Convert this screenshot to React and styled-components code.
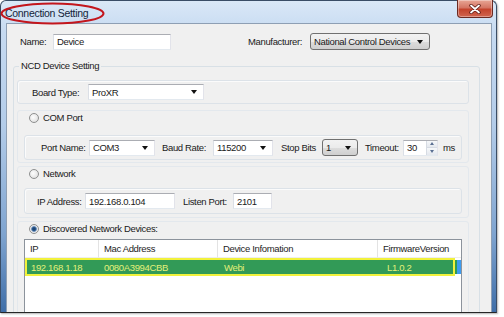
import React from 'react';
import styled, { createGlobalStyle } from 'styled-components';

const GlobalStyle = createGlobalStyle`
  html, body { margin: 0; padding: 0; background: #fff; }
  body {
    font-family: "Liberation Sans", Arial, sans-serif;
    font-size: 9.5px;
    letter-spacing: -0.35px;
    color: #1a1a1a;
  }
  * { box-sizing: border-box; }
`;

const Page = styled.div`
  width: 504px;
  height: 317px;
  overflow: hidden;
  background: #fff;
`;

const Window = styled.div`
  position: relative;
  width: 497px;
  height: 313px;
  display: flex;
  flex-direction: column;
  padding: 0 4px 0 5px;
  border: 1px solid #3a4d66;
  border-bottom-color: #262626;
  border-radius: 6px 6px 0 0;
  background: linear-gradient(to bottom, #dae8f7 0%, #c6daf1 10%, #b3cce9 40%, #7fa4d0 75%, #3f6ea8 100%);
  box-shadow: 1px 1px 2px rgba(0, 0, 0, 0.3);
`;

const TitleBar = styled.div`
  height: 22px;
  display: flex;
  align-items: flex-start;
  flex-shrink: 0;
`;

const Title = styled.span`
  margin: 6px 0 0 -1px;
  font-size: 10.5px;
  letter-spacing: -0.3px;
  line-height: 12px;
  color: #14243a;
`;

const CloseButton = styled.div`
  margin: -1px -1px 0 auto;
  width: 36px;
  height: 18px;
  display: flex;
  align-items: center;
  justify-content: center;
  border: 1px solid #6b2a22;
  border-top: none;
  border-radius: 0 0 4px 4px;
  background: linear-gradient(to bottom, #e8a695 0%, #d47563 45%, #c4432c 55%, #d0654f 100%);
  box-shadow: inset 0 0 0 1px rgba(255, 255, 255, 0.35);
`;

const Annotation = styled.svg`
  position: absolute;
  left: -1px;
  top: 1px;
  pointer-events: none;
`;

const Client = styled.div`
  flex: 1;
  overflow: hidden;
  background: #f0f0f0;
  border: 1px solid #8e9fb4;
  border-bottom: none;
`;

const Row = styled.div`
  display: flex;
  align-items: center;
  padding: ${p => p.$pad || '0'};
  height: ${p => p.$h || 'auto'};
`;

const Label = styled.span`
  flex-shrink: 0;
  width: ${p => p.$w}px;
  margin-left: ${p => p.$ml || 0}px;
  white-space: nowrap;
`;

const TextBox = styled.div`
  position: relative;
  flex-shrink: 0;
  width: ${p => p.$w}px;
  height: 16px;
  display: flex;
  align-items: center;
  justify-content: space-between;
  padding-left: 3px;
  background: #fff;
  border: 1px solid;
  border-color: #abadb3 #e2e3ea #e3e9ef #dbdfe6;
  white-space: nowrap;
`;

const DropButton = styled.div`
  flex-shrink: 0;
  width: ${p => p.$w}px;
  height: 17px;
  display: flex;
  align-items: center;
  justify-content: space-between;
  padding-left: 3px;
  border: 1px solid #707070;
  border-radius: 3px;
  background: linear-gradient(to bottom, #f2f2f2 0%, #ebebeb 50%, #dddddd 51%, #cfcfcf 100%);
  white-space: nowrap;
`;

const Arrow = styled.span`
  width: 0;
  height: 0;
  margin-right: 6px;
  border-left: 3.5px solid transparent;
  border-right: 3.5px solid transparent;
  border-top: 4px solid #111;
`;

const Spin = styled.div`
  align-self: stretch;
  width: 11px;
  display: flex;
  flex-direction: column;
  border-left: 1px solid #d6dbe3;
`;

const SpinHalf = styled.div`
  flex: 1;
  display: flex;
  align-items: center;
  justify-content: center;
  background: linear-gradient(to bottom, #f6f8fa, #e4e8ee);
  & + & { border-top: 1px solid #d6dbe3; }
`;

const SpinArrow = styled.span`
  width: 0;
  height: 0;
  border-left: 2.5px solid transparent;
  border-right: 2.5px solid transparent;
  ${p => p.$up ? 'border-bottom: 3px solid #5a6f92;' : 'border-top: 3px solid #5a6f92;'}
`;

const Group = styled.fieldset`
  margin: 10px 0 0 6px;
  width: 467px;
  height: 270px;
  min-width: 0;
  padding: 8px 10px 0 3px;
  border: 1px solid #d8e0e6;
  border-radius: 3px;
`;

const Legend = styled.legend`
  margin-left: 2px;
  padding: 0 2px;
  line-height: 12px;
`;

const Panel = styled.div`
  height: ${p => p.$h}px;
  margin-top: ${p => p.$mt || 0}px;
  display: flex;
  align-items: center;
  padding-left: ${p => p.$pl}px;
  border: 1px solid #dce2e8;
  border-radius: 3px;
  box-shadow: inset 1px 1px 0 #fbfbfb;
`;

const Section = styled.div`
  margin-top: ${p => p.$mt}px;
  padding: 0 6px ${p => p.$pb}px 6px;
  border: 1px solid #e3e8ed;
  border-radius: 3px;
`;

const RadioRow = styled.div`
  height: 13px;
  display: flex;
  align-items: center;
  padding-left: 5px;
`;

const Radio = styled.span`
  width: 10px;
  height: 10px;
  border-radius: 50%;
  border: 1px solid #8e8f8f;
  background: ${p => p.$checked
    ? 'radial-gradient(circle, #173b66 0, #2c5a8f 1.8px, #7e9cc2 2.6px, #e9e9e9 3.2px, #f7f7f7 100%)'
    : 'radial-gradient(circle at 40% 40%, #fdfdfd 0, #e8e8e8 60%, #d4d4d4 100%)'};
  flex-shrink: 0;
`;

const RadioText = styled.span`
  margin-left: 4px;
`;

const ListView = styled.div`
  margin-top: 4px;
  height: 120px;
  background: #fff;
  border: 1px solid #8c939c;
`;

const Cols = styled.div`
  display: grid;
  grid-template-columns: ${p => p.$cols};
  height: ${p => p.$h}px;
`;

const HeadCell = styled.div`
  display: flex;
  align-items: center;
  padding-left: 5px;
  border-right: 1px solid #e3e3e3;
  border-bottom: 1px solid #eeeeee;
  background: #fff;
  color: #1e1e1e;
  white-space: nowrap;
  &:last-child { border-right: none; }
`;

const ItemRow = styled.div`
  display: flex;
  align-items: center;
`;

const ItemBody = styled(Cols)`
  flex: 1;
  background: #329a57;
  border: 2px solid #f2f23c;
  color: #e4f07a;
`;

const ItemCell = styled.div`
  display: flex;
  align-items: center;
  padding-left: ${p => p.$pl}px;
  white-space: nowrap;
`;

const ItemTail = styled.span`
  width: 6px;
  height: 14px;
  background: linear-gradient(to right, #329a57 0 2px, #3d9cf0 2px);
`;

const devices = [
  { ip: '192.168.1.18', mac: '0080A3994CBB', info: 'Webi', fw: 'L1.0.2' },
];

export default function App() {
  return (
    <Page>
      <GlobalStyle />
      <Window>
        <TitleBar>
          <Title>Connection Setting</Title>
          <CloseButton>
            <svg width="12" height="10" viewBox="0 0 12 10">
              <path d="M2 1.5 L10 8.5 M10 1.5 L2 8.5" stroke="#5b1a14" strokeWidth="3.4" strokeLinecap="round" />
              <path d="M2 1.5 L10 8.5 M10 1.5 L2 8.5" stroke="#fff" strokeWidth="1.8" strokeLinecap="round" />
            </svg>
          </CloseButton>
        </TitleBar>

        <Client>
          <Row $pad="9px 0 0 13px" $h="26px">
            <Label $w={33}>Name:</Label>
            <TextBox $w={118}>Device</TextBox>
            <Label $w={62} $ml={77}>Manufacturer:</Label>
            <DropButton $w={120}>National Control Devices<Arrow /></DropButton>
          </Row>

          <Group>
            <Legend>NCD Device Setting</Legend>

            <Panel $h={24} $pl={14}>
              <Label $w={56}>Board Type:</Label>
              <TextBox $w={116}>ProXR<Arrow /></TextBox>
            </Panel>

            <Section $mt={6} $pb={2}>
              <RadioRow>
                <Radio />
                <RadioText>COM Port</RadioText>
              </RadioRow>
              <Panel $h={25} $mt={11} $pl={16}>
                <Label $w={48}>Port Name:</Label>
                <TextBox $w={66}>COM3<Arrow /></TextBox>
                <Label $w={51} $ml={7}>Baud Rate:</Label>
                <TextBox $w={60}>115200<Arrow /></TextBox>
                <Label $w={41} $ml={8}>Stop Bits</Label>
                <DropButton $w={36}>1<Arrow /></DropButton>
                <Label $w={38} $ml={7}>Timeout:</Label>
                <TextBox $w={35}>
                  30
                  <Spin>
                    <SpinHalf><SpinArrow $up /></SpinHalf>
                    <SpinHalf><SpinArrow /></SpinHalf>
                  </Spin>
                </TextBox>
                <Label $w={14} $ml={5}>ms</Label>
              </Panel>
            </Section>

            <Section $mt={3} $pb={3}>
              <RadioRow>
                <Radio />
                <RadioText>Network</RadioText>
              </RadioRow>
              <Panel $h={26} $mt={8} $pl={12}>
                <Label $w={48}>IP Address:</Label>
                <TextBox $w={90}>192.168.0.104</TextBox>
                <Label $w={50} $ml={8}>Listen Port:</Label>
                <TextBox $w={39}>2101</TextBox>
              </Panel>
            </Section>

            <Section $mt={3} $pb={0}>
              <RadioRow>
                <Radio $checked />
                <RadioText>Discovered Network Devices:</RadioText>
              </RadioRow>
              <ListView>
                <Cols $cols="74px 119px 160px 1fr" $h={18}>
                  <HeadCell>IP</HeadCell>
                  <HeadCell>Mac Address</HeadCell>
                  <HeadCell>Device Infomation</HeadCell>
                  <HeadCell>FirmwareVersion</HeadCell>
                </Cols>
                {devices.map(d => (
                  <ItemRow key={d.mac}>
                    <ItemBody $cols="72px 119px 160px 1fr" $h={18}>
                      <ItemCell $pl={4}>{d.ip}</ItemCell>
                      <ItemCell $pl={5}>{d.mac}</ItemCell>
                      <ItemCell $pl={6}>{d.info}</ItemCell>
                      <ItemCell $pl={9}>{d.fw}</ItemCell>
                    </ItemBody>
                    <ItemTail />
                  </ItemRow>
                ))}
              </ListView>
            </Section>
          </Group>
        </Client>

        <Annotation width="106" height="23" viewBox="0 0 106 23">
          <ellipse cx="52.5" cy="11.5" rx="51" ry="10" fill="none" stroke="#c3161d" strokeWidth="2" />
        </Annotation>
      </Window>
    </Page>
  );
}
